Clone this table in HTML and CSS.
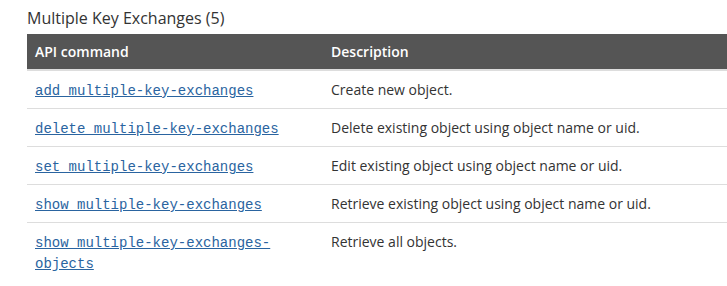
FILE: index.html
```html
<!DOCTYPE html>
<html lang="en">
<head>
  <meta charset="UTF-8" />
  <title>Multiple Key Exchanges</title>
  <link rel="stylesheet" href="styles.css">
</head>
<body>
  <div class="section">
    <div class="section-title">Multiple Key Exchanges (5)</div>
    <table class="api-table">
      <thead>
        <tr>
          <th class="col-cmd">API command</th>
          <th>Description</th>
        </tr>
      </thead>
      <tbody>
        <tr>
          <td><a href="#">add multiple-key-exchanges</a></td>
          <td>Create new object.</td>
        </tr>
        <tr>
          <td><a href="#">delete multiple-key-exchanges</a></td>
          <td>Delete existing object using object name or uid.</td>
        </tr>
        <tr>
          <td><a href="#">set multiple-key-exchanges</a></td>
          <td>Edit existing object using object name or uid.</td>
        </tr>
        <tr>
          <td><a href="#">show multiple-key-exchanges</a></td>
          <td>Retrieve existing object using object name or uid.</td>
        </tr>
        <tr class="last">
          <td><a href="#">show multiple-key-exchanges-objects</a></td>
          <td>Retrieve all objects.</td>
        </tr>
      </tbody>
    </table>
  </div>
</body>
</html>
```

FILE: styles.css
```css
body, html {
  margin: 0;
  padding: 0;
  background-color: #ffffff;
  font-family: 'Open Sans', 'Liberation Sans', sans-serif;
  color: #333333;
}

.section {
  padding: 7px 0 0 27px;
}

.section-title {
  font-size: 16px;
  line-height: 22px;
  margin-bottom: 5px;
}

.api-table {
  width: 700px;
  border-collapse: collapse;
  table-layout: fixed;
}

.api-table th {
  background-color: #555555;
  color: #ffffff;
  font-weight: 600;
  font-size: 14px;
  text-align: left;
  padding: 8px 8px 7px;
  line-height: 20px;
  border-bottom: 2px solid #dddddd;
}

.api-table .col-cmd {
  width: 280px;
}

.api-table td {
  font-size: 14px;
  line-height: 21px;
  padding: 8px 8px;
  vertical-align: top;
  border-bottom: 1px solid #dddddd;
}

.api-table tr.last td {
  border-bottom: none;
}

.api-table a {
  font-family: 'Liberation Mono', 'Courier New', monospace;
  font-size: 14px;
  line-height: 1;
  color: #2a64a0;
  text-decoration: underline;
}
```
